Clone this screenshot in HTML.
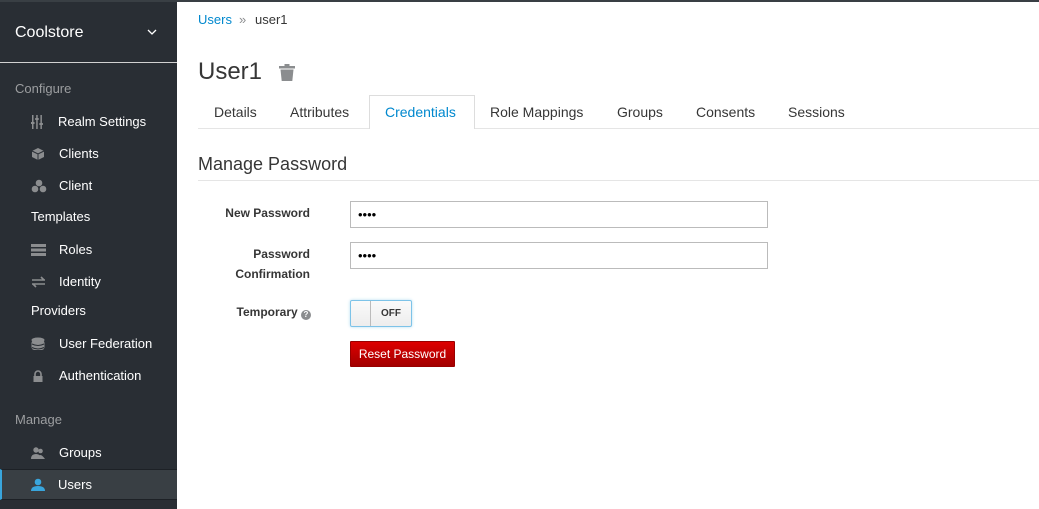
<!DOCTYPE html>
<html><head><meta charset="utf-8"><style>
*{box-sizing:border-box;margin:0;padding:0}
body{width:1039px;height:509px;overflow:hidden;background:#fff;font-family:"Liberation Sans",sans-serif;position:relative}
.topb{position:absolute;left:0;top:0;width:1039px;height:2px;background:#393f44}
.sb{position:absolute;left:0;top:2px;width:177px;height:507px;background:#292e34;color:#fff}
.sb .t{position:absolute;left:15px;top:22px;font-size:16px;color:#fff}
.sb .chev{position:absolute;left:146px;top:26px}
.sb .hr{position:absolute;left:0;top:60px;width:177px;height:1px;background:#d1d1d1}
.sec{position:absolute;left:15px;font-size:13px;color:#9c9ea0}
.it{position:absolute;left:31px;font-size:13px;color:#fff;white-space:nowrap}
.it svg{position:absolute;left:0;top:1px}
.it span{position:absolute;left:28px;top:0}
.act{position:absolute;left:0;top:467px;width:177px;height:31px;background:#393f44;border-left:2px solid #39a5dc;border-top:1px solid #1d2126;border-bottom:1px solid #1d2126}
.a{position:absolute;font-size:13px;white-space:nowrap}
.tab{position:absolute;top:104px;font-size:14px;color:#363636}
input{position:absolute;left:350px;width:418px;height:27px;border:1px solid #bbb;font-size:13px;padding-left:7px;font-family:"Liberation Sans",sans-serif}
.lbl{position:absolute;right:729px;font-size:12px;font-weight:bold;color:#363636;text-align:right;line-height:20px}
</style></head><body>
<div class="topb"></div>
<div class="sb">
 <div class="t">Coolstore</div>
 <svg class="chev" width="12" height="8" viewBox="0 0 12 8"><path d="M2 2l4 4 4-4" stroke="#fff" stroke-width="1.3" fill="none"/></svg>
 <div class="hr"></div>
 <div class="sec" style="top:79px">Configure</div>
 <div class="it" style="top:112px"><svg width="12" height="14"><g fill="#8b8d8f"><rect x="1" y="0" width="1.5" height="14"/><rect x="5.2" y="0" width="1.5" height="14"/><rect x="9.4" y="0" width="1.5" height="14"/><rect x="0" y="7" width="3.5" height="2"/><rect x="4.2" y="3" width="3.5" height="2"/><rect x="8.4" y="8" width="3.5" height="2"/></g></svg><span style="left:27px">Realm Settings</span></div>
 <div class="it" style="top:144px"><svg width="14" height="14"><path d="M7 1l6 3v6l-6 3-6-3V4z" fill="#8b8d8f"/><path d="M1 4l6 3 6-3M7 7v6" stroke="#292e34" stroke-width="1" fill="none"/></svg><span>Clients</span></div>
 <div class="it" style="top:176px"><svg width="16" height="14"><g fill="#8b8d8f"><circle cx="8" cy="4" r="3.3"/><circle cx="4" cy="10" r="3.3"/><circle cx="12" cy="10" r="3.3"/></g></svg><span>Client</span></div>
 <div class="it" style="left:31px;top:207px">Templates</div>
 <div class="it" style="top:240px"><svg width="15" height="13"><g fill="#8b8d8f"><rect y="1" width="15" height="3"/><rect y="5.5" width="15" height="3"/><rect y="10" width="15" height="3"/></g></svg><span>Roles</span></div>
 <div class="it" style="top:272px"><svg width="15" height="13"><path d="M1 5h13M10 2l3 3M14 9H1M5 12L2 9" stroke="#8b8d8f" stroke-width="1.6" fill="none"/></svg><span>Identity</span></div>
 <div class="it" style="left:31px;top:301px">Providers</div>
 <div class="it" style="top:334px"><svg width="14" height="15"><g fill="#8b8d8f"><ellipse cx="7" cy="3" rx="6.5" ry="2.5"/><rect x=".5" y="3" width="13" height="10" rx="3"/></g><path d="M1 7q6 3 12 0M1 10.5q6 3 12 0" stroke="#292e34" fill="none"/></svg><span>User Federation</span></div>
 <div class="it" style="top:366px"><svg width="14" height="14"><path d="M4 7V5a3 3 0 016 0v2" stroke="#8b8d8f" stroke-width="1.6" fill="none"/><rect x="2.5" y="7" width="9" height="6" fill="#8b8d8f"/></svg><span>Authentication</span></div>
 <div class="sec" style="top:410px">Manage</div>
 <div class="it" style="top:443px"><svg width="14" height="14"><g fill="#8b8d8f"><circle cx="5" cy="4" r="2.7"/><path d="M0 13q0-5 5-5t5 5z"/><circle cx="9.5" cy="5" r="2.3"/><path d="M7 13q1-4 2.5-4t4.5 4z"/></g></svg><span>Groups</span></div>
 <div class="act"></div>
 <div class="it" style="top:475px"><svg width="14" height="14"><g fill="#39a5dc"><circle cx="7" cy="4" r="3.3"/><path d="M0 13q0-5 7-5t7 5z"/></g></svg><span style="left:27px">Users</span></div>
</div>

<div class="a" style="left:198px;top:12px;color:#0088ce">Users</div>
<div class="a" style="left:239px;top:12px;color:#8b8d8f;font-size:13px">»</div>
<div class="a" style="left:255px;top:12px;color:#363636">user1</div>
<div class="a" style="left:198px;top:58px;font-size:24px;color:#363636">User1</div>
<svg style="position:absolute;left:279px;top:64px" width="16" height="17"><g fill="#8b8d8f"><rect x="0" y="2" width="16" height="2.5"/><rect x="5.5" y="0" width="5" height="2"/><path d="M1.5 5.5h13l-1.2 11.5H2.7z"/></g></svg>

<div style="position:absolute;left:198px;top:128px;width:841px;height:1px;background:#e5e5e5"></div>
<div style="position:absolute;left:369px;top:95px;width:106px;height:34px;background:#fff;border:1px solid #ddd;border-bottom:none"></div>
<div class="tab" style="left:214px">Details</div>
<div class="tab" style="left:290px">Attributes</div>
<div class="tab" style="left:385px;color:#0088ce">Credentials</div>
<div class="tab" style="left:490px">Role Mappings</div>
<div class="tab" style="left:617px">Groups</div>
<div class="tab" style="left:696px">Consents</div>
<div class="tab" style="left:788px">Sessions</div>

<div class="a" style="left:198px;top:154px;font-size:18px;color:#363636">Manage Password</div>
<div style="position:absolute;left:198px;top:180px;width:841px;height:1px;background:#e5e5e5"></div>

<div class="lbl" style="top:203px">New Password</div>
<input style="top:201px" value="••••">
<div class="lbl" style="top:244px">Password<br>Confirmation</div>
<input style="top:242px" value="••••">
<div class="lbl" style="top:302px;right:728px">Temporary <span style="display:inline-block;width:10px;height:10px;border-radius:50%;background:#8b8d8f;color:#fff;font-size:8px;line-height:10px;text-align:center;vertical-align:-1px">?</span></div>
<div style="position:absolute;left:350px;top:300px;width:62px;height:27px;border:1px solid #7dc3e8;border-radius:2px;background:linear-gradient(#fafafa,#ededed);box-shadow:0 0 3px #b6ddf1">
 <div style="position:absolute;left:19px;top:0;width:1px;height:25px;background:#bbb"></div>
 <div style="position:absolute;left:30px;top:7px;font-size:10px;font-weight:bold;color:#363636">OFF</div>
</div>
<div style="position:absolute;left:350px;top:341px;width:105px;height:26px;background:linear-gradient(#d00,#a30000);border:1px solid #900;border-radius:1px;color:#fff;font-size:12px;text-align:center;line-height:24px">Reset Password</div>
</body></html>
